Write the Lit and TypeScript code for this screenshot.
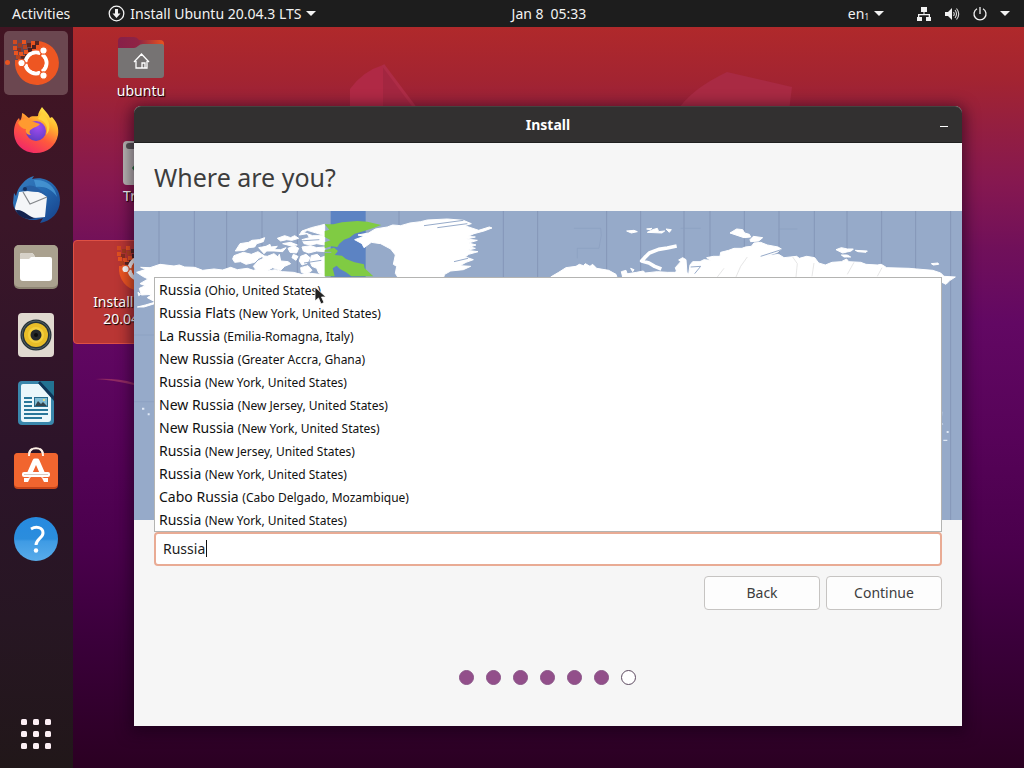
import { LitElement, html, svg, css } from "lit";
import { customElement, property, state } from "lit/decorators.js";

const places: [string, string][] = [
  ["Russia", "(Ohio, United States)"],
  ["Russia Flats", "(New York, United States)"],
  ["La Russia", "(Emilia-Romagna, Italy)"],
  ["New Russia", "(Greater Accra, Ghana)"],
  ["Russia", "(New York, United States)"],
  ["New Russia", "(New Jersey, United States)"],
  ["New Russia", "(New York, United States)"],
  ["Russia", "(New Jersey, United States)"],
  ["Russia", "(New York, United States)"],
  ["Cabo Russia", "(Cabo Delgado, Mozambique)"],
  ["Russia", "(New York, United States)"],
];

/* Loose squares breaking away from the logo disc */
const pixels: [number, number, string][] = [
  [9, 9, "#d14a20"], [14, 12, "#a03a20"], [18, 9, "#e95420"], [9, 15, "#e0501f"], [13, 17, "#8a2f20"],
  [19, 14, "#b8431f"], [23, 12, "#5a2620"], [27, 10, "#e95420"], [10, 20, "#e95420"], [15, 21, "#e95420"],
  [20, 19, "#e95420"], [24, 17, "#4a2020"], [28, 14, "#4a2020"], [17, 25, "#5a2620"], [12, 24, "#b8431f"],
  [21, 23, "#5a2620"], [14, 28, "#e95420"], [31, 10, "#5a2620"],
];

const ubuntuLogo = svg`
  <path d="M33 10A22 22 0 1 1 11 34L11 29L17 29V24H22V19H27V14H33Z" fill="#ee5622"/>
  ${pixels.map(([x, y, c]) => svg`<rect x=${x} y=${y} width="4" height="4" fill=${c}/>`)}
  <circle cx="32" cy="32" r="10.500" fill="none" stroke="#fff" stroke-width="4"/>
  <g stroke="#ee5622" stroke-width="1.600"><path d="M32 32L39.500 45M32 32L39.500 19M32 32H17"/></g>
  <circle cx="32" cy="32" r="8.500" fill="#ee5622"/>
  <g fill="#fff" stroke="#ee5622" stroke-width="1.200">
    <circle cx="39.500" cy="19.500" r="3.700"/><circle cx="39.500" cy="44.500" r="3.700"/><circle cx="17.500" cy="32" r="3.700"/>
  </g>`;

const dockItems = [
  { name: "Install Ubuntu", active: true, art: ubuntuLogo },
  {
    name: "Firefox",
    art: svg`
    <defs>
      <linearGradient id="ff" x1=".8" y1="0" x2=".25" y2="1"><stop offset="0" stop-color="#fff44f"/><stop offset=".3" stop-color="#ffb52e"/><stop offset=".6" stop-color="#ff5a3c"/><stop offset="1" stop-color="#f0246c"/></linearGradient>
      <radialGradient id="fp" cx=".6" cy=".3" r=".8"><stop offset="0" stop-color="#a24bf0"/><stop offset="1" stop-color="#5a3cc0"/></radialGradient>
    </defs>
    <path d="M38 8C41 12 44 14 46 19L48 18C53 23 55 29 54 36C52 47 43 54 32 54C19 54 10 45 10 33C10 27 12 22 15 19L16 22C18 19 18 15 18 14C21 15 23 18 25 19C28 16 31 18 34 17C34 14 36 11 38 8Z" fill="url(#ff)"/>
    <circle cx="32" cy="32" r="10" fill="url(#fp)"/>
    <path d="M14 24C18 18 24 20 27 22L36 25C34 28 30 28 28 30C25 31 25 34 27 36C23 36 21 33 22 30C19 30 16 28 14 24Z" fill="#ff9a30"/>
    <path d="M34 20C42 22 45 29 42 36C48 31 46 20 38 14Z" fill="#ffd23c"/>`,
  },
  {
    name: "Thunderbird",
    art: svg`
    <defs><linearGradient id="tb" x1="0" y1="0" x2="1" y2="1"><stop offset="0" stop-color="#3a7fc0"/><stop offset=".5" stop-color="#2468b0"/><stop offset="1" stop-color="#163e88"/></linearGradient></defs>
    <path d="M18 17C22 12 26 10 30 9L28 12C43 8 56 19 56 33C56 46 47 54 36 56L39 51C26 57 10 49 9 36L10 26L12 29C13 24 15 20 18 17Z" fill="url(#tb)"/>
    <path d="M30 13C42 12 51 19 53 30C48 22 40 19 32 20Z" fill="#4fa0dc" opacity=".7"/>
    <path d="M15 25C14 32 11 38 11 42C14 44 13 46 17 48C23 52 35 51 41 50L43 30L36 25L24 24Z" fill="#f4f6f8"/>
    <path d="M12 43C20 42 25 51 32 51C23 54 14 50 12 43Z" fill="#14234e"/>
    <path d="M19 25L26 37L43 30" fill="none" stroke="#84888c" stroke-width="1.200"/>
    <path d="M17 24C20 18 27 16 35 22L43 28L34 25L23 24Z" fill="#285fa4"/><circle cx="21" cy="22" r="2" fill="#153260"/>`,
  },
  {
    name: "Files",
    art: svg`
    <rect x="10" y="10" width="44" height="44" rx="5" fill="#8e8574"/><rect x="10" y="10" width="44" height="42" rx="5" fill="#aaa18f"/>
    <path d="M16 20Q16 18 18 18H27Q29 18 30 20L31 22H46Q48 22 48 24V43Q48 46 45 46H19Q16 46 16 43Z" fill="#fff"/>
    <path d="M16 20Q16 18 18 18H27Q29 18 30 20L31 22H27L25 24H16Z" fill="#d6d1c8"/>`,
  },
  {
    name: "Rhythmbox",
    art: svg`
    <rect x="14" y="10" width="36" height="44" rx="4" fill="#e0d9d0"/>
    <circle cx="32" cy="32" r="15.500" fill="#263238"/><circle cx="32" cy="32" r="14" fill="none" stroke="#526064"/>
    <circle cx="32" cy="32" r="12" fill="#e8bd28"/><circle cx="32" cy="32" r="8" fill="#f3cf3c"/>
    <circle cx="32" cy="32" r="5.500" fill="#26292b"/><circle cx="32" cy="32" r="2" fill="#0d0d0d"/>`,
  },
  {
    name: "LibreOffice Writer",
    art: svg`
    <path d="M18 10H50V50Q50 54 46 54H18Q14 54 14 50V14Q14 10 18 10Z" fill="#3a87ac"/>
    <path d="M19 13H35L47 26V48Q47 51 44 51H20Q17 51 17 48V15Q17 13 19 13Z" fill="#eaf7fb"/>
    <path d="M36 10H50V25Z" fill="#237292"/><path d="M36 10L50 25V30L34 12Z" fill="#0f3558"/>
    <g stroke="#28779a" stroke-width="2"><path d="M20 27H28M20 31H28M20 35H28M20 39H44M20 43H44M20 47H38"/></g>
    <rect x="30" y="26" width="14" height="10" fill="#276c8c"/><rect x="31" y="27" width="12" height="8" fill="#80bcd4"/>
    <path d="M31 35L34 30L37 33L39 31L43 35Z" fill="#34454d"/><circle cx="40" cy="29" r="1" fill="#ffe36e"/>`,
  },
  {
    name: "Ubuntu Software",
    art: svg`
    <path d="M25 16C25 7 39 7 39 16" fill="none" stroke="#fff1e6" stroke-width="2"/>
    <rect x="10" y="14" width="44" height="36" rx="4" fill="#c8461b"/><rect x="10" y="14" width="44" height="34" rx="4" fill="#f1652f"/>
    <path d="M25 17C25 13 26 11 28 10M39 17C39 13 38 11 36 10" fill="none" stroke="#fff1e6" stroke-width="2"/>
    <path d="M24 38L31 22H33L40 38" fill="none" stroke="#fff" stroke-width="5" stroke-linejoin="round"/>
    <rect x="18" y="33" width="28" height="5" rx="2" fill="#fff"/><path d="M20 39H26L24 43H20ZM38 39H44V43H40Z" fill="#fff"/>
    <path d="M20 35.500H44" stroke="#d8c8c0" stroke-width="1"/>`,
  },
  {
    name: "Help",
    art: svg`
    <defs><linearGradient id="hp" x1="0" y1="0" x2="0" y2="1"><stop offset="0" stop-color="#268ae0"/><stop offset=".5" stop-color="#2b8ddd"/><stop offset=".55" stop-color="#3f9be4"/><stop offset="1" stop-color="#59acea"/></linearGradient></defs>
    <circle cx="32" cy="32" r="22" fill="url(#hp)"/>
    <path d="M27 22C32 19 39 20 39 26C39 31 32 32 32 38" fill="none" stroke="#fff" stroke-width="3"/><circle cx="32" cy="43.500" r="2.200" fill="#fff"/>`,
  },
];

@customElement("dock-bar")
class DockBar extends LitElement {
  static styles = css`
    :host { display: flex; flex-direction: column; gap: 4px; width: 73px; padding: 4px 5px 2px 4px; box-sizing: border-box; position: relative; z-index: 1;
      background: linear-gradient(#421422, #3b1628 25%, #331529 42%, #2c1429 58%, #271623 80%, #211719); }
    .app { display: block; width: 64px; height: 64px; padding: 0; border: 0; border-radius: 5px; background: none; position: relative; }
    .app.active { background: #6b4750; }
    .app.active::before { content: ""; position: absolute; left: 1px; top: 29px; width: 5px; height: 5px; border-radius: 50%; background: #e95420; }
    .app svg { display: block; width: 64px; height: 64px; }
    .grid { margin-top: auto; }
  `;
  render() {
    return html`
      ${dockItems.map(i => html`<button class="app ${i.active ? "active" : ""}" aria-label=${i.name}><svg viewBox="0 0 64 64">${i.art}</svg></button>`)}
      <button class="app grid" aria-label="Show Applications"><svg viewBox="0 0 64 64" fill="#fdeff5">
        ${[17, 29, 41].map(y => [17, 29, 41].map(x => svg`<rect x=${x} y=${y} width="6" height="6" rx="1.500"/>`))}
      </svg></button>`;
  }
}

/* Drawn on a 2484-unit-wide grid, three units to each unit of the view box */
const zoneLines = [75, 181, 278, 384, 490, 795, 1108, 1211, 1418, 1520, 1650, 1728, 1831, 1935, 2041, 2139, 2243, 2345, 2450];

const worldMap = html`<svg class="map" viewBox="0 0 828 309" preserveAspectRatio="none" aria-label="World map">
  <rect width="828" height="309" fill="#96aac9"/>
  <g transform="translate(0 -6) scale(.33333)">
    <path d=${zoneLines.map(x => `M${x} 18V950`).join("")} stroke="#8597b8" stroke-width="3" fill="none"/>
    <path d="M1320 70H1400L1402 90 1395 130H1330V160M795 64V80M0 390H60M0 590H60M1640 70H1700M1935 72H1990" stroke="#8b9ebf" stroke-width="2" fill="none"/>
    <rect x="590" y="18" width="105" height="240" fill="#5c83c3"/>
    <g fill="#fff" stroke="#fff" stroke-width="3" stroke-linejoin="round">
      <path d="M8 202L36 193 20 187 48 188 78 178 120 183 136 180 152 186 182 187 206 196 240 192 266 195 290 187 310 194 340 190 358 196 376 191 400 198 424 194 446 200 478 202 502 208 530 205 572 210V290H62L40 278 55 268 22 270 16 250 34 242 18 236 42 222 26 214Z"/>
      <path d="M10 306L34 300 62 292V296L30 306ZM12 262L20 268 14 272Z"/>
      <path d="M300 152L328 142 352 148 372 140 390 152 374 160 362 172 336 178 320 170 302 172 296 162Z"/>
      <path d="M304 138L318 116 344 112 354 106 376 104 392 98 388 110 368 116 362 126 344 128 332 136Z"/>
      <path d="M358 184L372 168 388 160 384 152 400 154 420 146 432 156 436 148 440 168 462 170 470 176 452 184 440 196 416 188 398 198 378 194 364 192Z"/>
      <path d="M374 128L396 124 408 118 410 126 430 124 420 134 440 134 456 128 446 140 420 138 398 138 390 146ZM430 100L452 92 470 98 482 92 494 100 474 106 458 104 440 108Z"/>
      <path d="M462 130L480 122 494 130 488 144 468 142ZM446 116L470 112 490 120 468 122ZM504 104L526 98 520 86 496 90 504 78 532 68 556 62 572 58V120L548 116 530 120 510 116ZM540 82L520 76 508 82 536 92 572 92Z"/>
      <path d="M504 126L530 122 548 128 572 126V140L548 138 524 144 508 138ZM500 154L516 148 528 158 520 174 504 180 496 168ZM532 152L550 148 560 158 572 154V210L554 204 548 190 534 184 528 170ZM500 188L522 182 534 196 518 208 502 202ZM478 148L492 154 486 166 474 158Z"/>
      <path d="M662 104L690 94 672 90 704 84 724 72 760 66 776 60 800 62 828 54 860 50 880 45 940 42 988 46 1012 56 992 62 1034 76 1066 66 1074 69 1050 78 1020 86 1002 94 1024 96 998 102 1030 106 1004 114 1026 120 1008 126 1024 130 1000 136 1032 140 1004 148 994 156 1018 164 996 172 978 182 1010 184 988 194 950 198 932 208 924 230H800L784 205 788 184 778 178 784 150 770 132 740 116 712 112 690 128 684 116Z"/>
      <path d="M1250 216L1274 202 1296 188 1326 184 1336 178 1348 182 1354 176 1368 184 1376 178 1388 190 1424 196 1446 208 1450 220H1250ZM1462 200L1476 196 1480 208 1466 216ZM1490 190L1500 194 1496 200ZM1460 222L1470 208 1508 202 1528 198 1534 204 1570 200 1600 202 1622 202 1636 196 1660 204 1680 222Z"/>
      <path d="M1478 78L1500 76 1510 80 1492 84ZM1540 82L1556 74 1570 70 1574 80 1592 78 1584 84ZM1596 72L1612 74 1606 82ZM1538 72L1554 70 1548 74Z"/>
      <path d="M1624 188L1640 170 1634 165 1646 158 1656 164 1660 218H1634ZM1668 180L1676 170 1698 170 1710 164 1730 166 1718 158 1738 154 1758 154 1760 142 1784 136 1800 130 1824 130 1834 126 1852 124 1860 114 1880 112 1900 120 1932 126 1942 132 1930 142 1894 154 1934 148 1950 158 1988 154 1996 160 2018 154 2042 158 2054 174 2074 180 2094 172 2122 170 2138 162 2144 170 2180 172 2196 178 2230 180 2242 178 2258 188 2326 190 2348 192 2396 196 2420 204 2430 214 2464 216 2448 226 2436 238 2424 232 2418 222H1662Z"/>
      <path d="M1788 84L1808 72 1826 74 1832 84 1846 88 1850 96 1830 98ZM1848 104L1858 94 1886 98 1874 108 1850 110ZM2106 134L2122 128 2140 132 2158 132 2152 138 2126 144ZM2122 150L2140 150 2150 156 2130 156ZM2164 136L2200 138 2196 142 2172 140ZM2392 176L2412 174 2414 178 2398 180Z"/>
    </g>
    <path d="M1628 123L1600 129 1574 133 1546 144 1532 158 1523 168 1545 174 1562 184 1582 192" fill="none" stroke="#fff" stroke-width="11" stroke-linejoin="round"/>
    <path d="M24 608H31V614H24ZM41 625H47V631H41ZM2405 627L2425 620 2424 636 2410 633ZM2420 650L2428 658 2420 660ZM2438 678H2444V684H2438ZM2402 696L2418 690 2412 714 2400 716ZM2428 704H2440V708H2428Z" fill="#dfe8f5"/>
    <g fill="#80cb43">
      <path d="M572 58L598 58 624 52 670 48 700 50 742 60 720 68 690 78 662 86 646 98 630 104 616 116 610 126 592 124 572 130V112L590 106 572 96V78L586 74Z"/>
      <path d="M572 136L600 128 612 138 602 150 624 152 636 162 662 172 690 178 692 190 718 214H652L636 202 618 192 608 182 596 190 602 214H572Z"/>
    </g>
    <g fill="none" stroke="#96aac9" stroke-width="3">
      <path d="M1880 154L1942 134M870 62L988 46M910 68L1000 56M1670 186L1700 184 1682 206M572 142H592M510 174L562 166M496 108L556 104M960 170L1002 160"/>
    </g>
    <path d="M1840 156L1820 184 1806 216M1976 156L1990 176 1986 216M2040 174L2034 214M2160 172L2140 208M2244 188L2230 214M1770 190L1750 216" fill="none" stroke="#dadada" stroke-width="2"/>
  </g>
</svg>`;

@customElement("install-window")
class InstallWindow extends LitElement {
  @property() heading = "Where are you?";
  @state() private query = "Russia";

  static styles = css`
    :host { display: block; border-radius: 7px 7px 0 0; background: #f6f6f6; color: #3d3d3d; box-shadow: 0 3px 14px 4px rgba(20, 0, 20, .5); }
    .title { display: grid; grid-template-columns: 1fr auto 1fr; align-items: center; height: 37px; box-sizing: border-box; padding: 0 13px;
      border-top: 1px solid #454341; border-bottom: 1px solid #202020; border-radius: 7px 7px 0 0; background: #323030; color: #fff; }
    .title h1 { margin: 0; grid-column: 2; font-size: 14px; line-height: 20px; font-weight: 700; }
    .min { justify-self: end; width: 10px; height: 20px; padding: 0; border: 0; background: none; }
    .min svg { display: block; }
    h2 { margin: 0; padding: 14px 20px; font-size: 25px; line-height: 40px; font-weight: 400; }
    .map { display: block; width: 100%; height: 309px; }
    .form { padding: 12px 20px 41px; }
    .field { position: relative; }
    input { display: block; width: 100%; height: 34px; box-sizing: border-box; padding: 0 7px 2px; border: 2px solid #e9ab94; border-radius: 4px; outline: 0; background: #fff; color: #1c1c1c; font: inherit; }
    .caret { position: absolute; left: 52px; top: 8px; width: 1px; height: 17px; background: #111; }
    .popup { position: absolute; left: 0; right: 0; bottom: 100%; margin: 0; padding: 0; list-style: none; border: 1px solid #b4b4b2; background: #fff; color: #111; }
    .popup li { padding: 0 4px; line-height: 23px; height: 23px; white-space: nowrap; }
    .popup small { font-size: 12px; }
    .actions { display: flex; justify-content: flex-end; gap: 6px; padding-top: 10px; }
    .actions button { width: 116px; height: 34px; padding: 0; border: 1px solid #c6c4c2; border-radius: 4px; background: #fdfdfd; color: #3d3d3d; font: inherit; }
    .steps { display: flex; justify-content: center; gap: 12px; padding: 60px 2px 0 0; }
    .dot { width: 15px; height: 15px; box-sizing: border-box; border: 1px solid #8a5488; border-radius: 50%; background: #924f8a; }
    .dot.open { background: #fff; border-color: #5d4a60; }
  `;
  render() {
    return html`
      <header class="title"><h1>Install</h1>
        <button class="min" aria-label="Minimize"><svg width="10" height="20"><rect x="1" y="11" width="8" height="1" fill="#fff"/></svg></button></header>
      <h2>${this.heading}</h2>
      ${worldMap}
      <div class="form">
        <div class="field">
          <input aria-label="Location" .value=${this.query} @input=${(e: Event) => (this.query = (e.target as HTMLInputElement).value)} />
          <span class="caret"></span>
          <ul class="popup">${places.map(([n, r]) => html`<li>${n} <small>${r}</small></li>`)}</ul>
        </div>
        <div class="actions"><button>Back</button><button>Continue</button></div>
        <div class="steps">${[0, 1, 2, 3, 4, 5, 6].map(i => html`<span class="dot ${i === 6 ? "open" : ""}"></span>`)}</div>
      </div>`;
  }
}

@customElement("app-root")
class AppRoot extends LitElement {
  static styles = css`
    :host { display: flex; flex-direction: column; min-height: 100vh; overflow: hidden; font: 14px/20px "Noto Sans", "Open Sans", sans-serif; }
    .top { display: grid; grid-template-columns: 1fr auto 1fr; align-items: center; height: 27px; padding: 0 14px 0 12px; background: #1d1d1d; color: #f2f2f2; white-space: nowrap; }
    .group { display: flex; align-items: center; }
    .top button { display: flex; align-items: center; gap: 5px; padding: 0; border: 0; background: none; color: inherit; font: inherit; }
    .top .clock { padding-left: 76px; }
    .menu { margin-left: 38px; }
    .end { justify-content: flex-end; gap: 12px; }
    .lang { margin-right: 20px; }
    .lang small { font-size: 8px; line-height: 8px; vertical-align: -1px; }
    .tray svg + svg { margin-left: 7px; }
    .body { flex: 1; display: flex; }
    .desktop { flex: 1; position: relative; min-height: 741px;
      background: linear-gradient(#b0292b 0, #a32431 7%, #951f3f 13%, #861850 21%, #70105a 30%, #620863 40%, #570359 55%, #4a004c 70%, #3a003a 83%, #2b0022 100%); }
    .art { position: absolute; inset: 0; width: 100%; height: 100%; }
    .launcher { position: absolute; display: flex; flex-direction: column; align-items: center; width: 104px; color: #fff; text-align: center; text-shadow: 1px 1px 1px #000; line-height: 17px; }
    .home { left: 16px; top: 9px; }
    .trash { left: 16px; top: 112px; }
    .home svg { margin-bottom: 2px; }
    .installer { left: 0; top: 213px; width: 134px; height: 104px; box-sizing: border-box; border: 1px solid #df5044; border-radius: 4px; background: #b93634; }
    .installer svg { margin-bottom: -4px; }
    .window { position: absolute; left: 61px; right: 62px; top: 79px; }
    .pointer { position: absolute; left: 241px; top: 259px; }
  `;
  render() {
    const arrow = html`<svg width="10" height="5"><path d="M0 0H10L5 5Z" fill="#f2f2f2"/></svg>`;
    return html`
      <header class="top">
        <div class="group">
          <button>Activities</button>
          <button class="menu"><svg width="17" height="17" viewBox="0 0 17 17"><circle cx="8.500" cy="8.500" r="7.300" fill="none" stroke="#f2f2f2" stroke-width="1.300"/><path d="M7 4H10V8.500H12.500L8.500 13L4.500 8.500H7Z" fill="#f2f2f2"/></svg>Install Ubuntu 20.04.3 LTS${arrow}</button>
        </div>
        <button class="clock">Jan 8&ensp;05:33</button>
        <div class="group end">
          <button class="lang"><span>en<small>1</small></span>${arrow}</button>
          <button class="tray" aria-label="System">
            <svg width="16" height="16" viewBox="0 0 16 16" fill="#f2f2f2"><path d="M5 1H11V6H8.500V8H14V11H15V15H10V11H12.700V9.300H3.300V11H6V15H1V11H2V8H7.500V6H5Z"/></svg>
            <svg width="16" height="16" viewBox="0 0 16 16"><path d="M1 6H4L8 2V14L4 10H1Z" fill="#f2f2f2"/><path d="M9.500 6Q11 8 9.500 10M11 4Q14 8 11 12M12.500 2.500Q17 8 12.500 13.500" fill="none" stroke="#ddd" stroke-width="1.100"/></svg>
            <svg width="16" height="16" viewBox="0 0 16 16" fill="none" stroke="#f2f2f2" stroke-width="1.300"><path d="M5 2.700A6 6 0 1 0 11 2.700M8 1V8"/></svg>
            ${arrow}
          </button>
        </div>
      </header>
      <div class="body">
        <dock-bar></dock-bar>
        <main class="desktop">
          <svg class="art" viewBox="0 0 951 741" preserveAspectRatio="none" aria-hidden="true">
            <path d="M277 86V62Q290 44 310 38V86Z" fill="#b02945"/><path d="M310 38V86H346L318 50Z" fill="#a32640"/><path d="M310 38L346 86" stroke="#ae2c46" stroke-width="3"/>
            <path d="M604 84Q618 62 654 45L719 60 716 84Z" fill="#a92a43"/>
            <path d="M22 352Q45 351 61 356V358Q40 353 22 352Z" fill="#902a62"/>
          </svg>
          <div class="launcher home">
            <svg width="48" height="44" viewBox="0 0 48 44"><defs><linearGradient id="fd"><stop stop-color="#872049"/><stop offset=".45" stop-color="#8f2444"/><stop offset="1" stop-color="#e95420"/></linearGradient></defs>
              <path d="M1 5Q1 1 5 1H17Q20 1 22 4H43Q47 4 47 8V38H1Z" fill="url(#fd)"/><path d="M1 12H17Q19 12 21 10Q23 8 26 8H45Q47 8 47 11V39Q47 42 44 42H4Q1 42 1 39Z" fill="#767373"/>
              <path d="M17 26L24.500 18L32 26M19 25V32H30V25M25 32V27H28V32" fill="none" stroke="#fff" stroke-width="1.300"/></svg>
            ubuntu
          </div>
          <div class="launcher trash">
            <svg width="38" height="48" viewBox="0 0 38 48"><rect x="1" y="2" width="36" height="44" rx="4" fill="#b9b7b5"/><rect x="4" y="4" width="30" height="6" rx="3" fill="#555"/><path d="M10 29L14 24L18 33H13Z" fill="#24743f"/></svg>
            Trash
          </div>
          <div class="launcher installer">
            <svg width="56" height="56" viewBox="4 4 56 56">${ubuntuLogo}</svg>
            <span>Install Ubuntu<br />20.04.3 LTS</span>
          </div>
          <install-window class="window"></install-window>
          <svg class="pointer" width="14" height="20" viewBox="0 0 14 20"><path d="M1 1V15L4.500 12L7 18L10 16.500L7.500 11H12Z" fill="#222" stroke="#fff" stroke-width=".8"/></svg>
        </main>
      </div>`;
  }
}
